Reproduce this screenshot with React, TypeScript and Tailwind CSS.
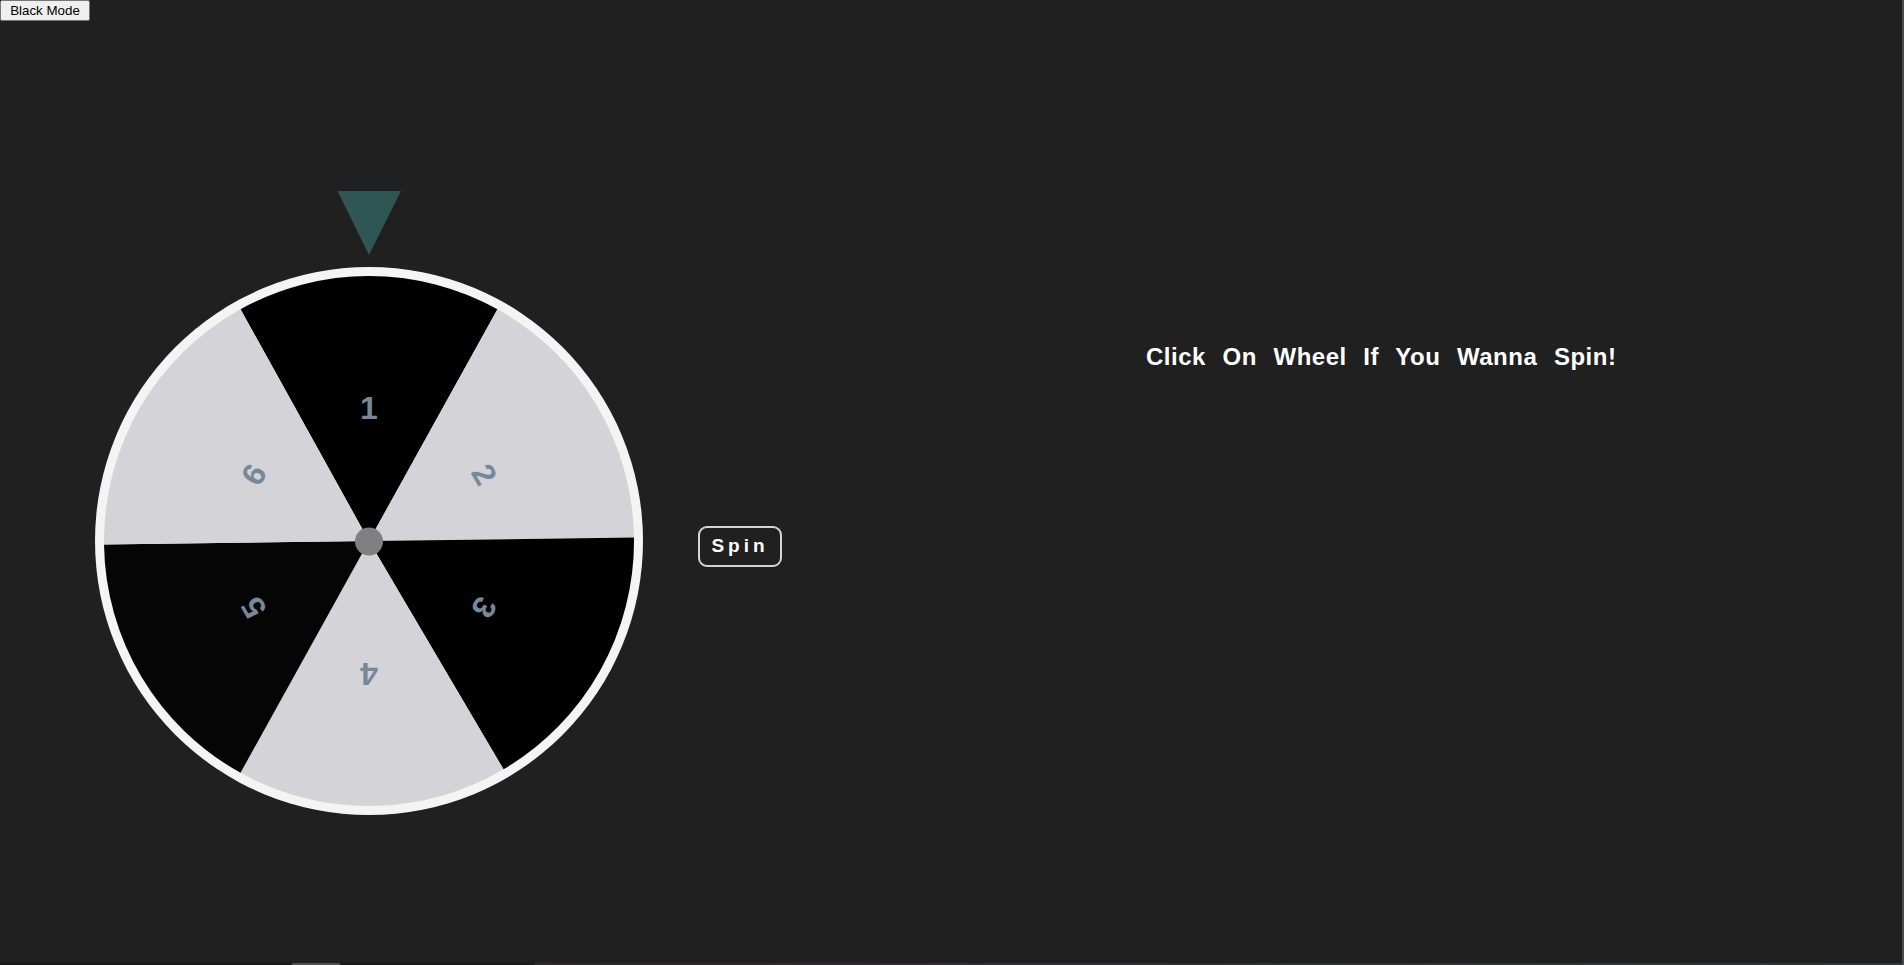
import React from "react";

const C = 274;
const R_IN = 265;

function pt(deg: number, r: number): [number, number] {
  const a = (deg * Math.PI) / 180;
  return [C + r * Math.sin(a), C - r * Math.cos(a)];
}

function sector(a0: number, a1: number): string {
  const [x0, y0] = pt(a0, R_IN);
  const [x1, y1] = pt(a1, R_IN);
  return `M ${C} ${C} L ${x0.toFixed(2)} ${y0.toFixed(2)} A ${R_IN} ${R_IN} 0 0 1 ${x1.toFixed(2)} ${y1.toFixed(2)} Z`;
}

const sectors = [
  { a0: -29, a1: 29, fill: "#000000" },
  { a0: 29, a1: 89.25, fill: "#d3d3d8" },
  { a0: 89.25, a1: 149.5, fill: "#000000" },
  { a0: 149.5, a1: 209, fill: "#d3d3d8" },
  { a0: 209, a1: 269.25, fill: "#050505" },
  { a0: 269.25, a1: 331, fill: "#d3d3d8" },
];

function Wheel() {
  return (
    <svg width="548" height="548" viewBox="0 0 548 548" className="block">
      <circle cx={C} cy={C} r={274} fill="#f4f4f4" />
      {sectors.map((s, i) => (
        <path key={i} d={sector(s.a0, s.a1)} fill={s.fill} />
      ))}
      {[1, 2, 3, 4, 5, 6].map((n, i) => {
        const ang = i * 60;
        const [x, y] = pt(ang, 133);
        return (
          <text
            key={n}
            x={x}
            y={y}
            fill="#778899"
            fontSize="32"
            fontWeight="bold"
            fontFamily="'Liberation Sans', Arial, sans-serif"
            textAnchor="middle"
            dominantBaseline="central"
            transform={`rotate(${ang} ${x} ${y})`}
          >
            {n}
          </text>
        );
      })}
      <circle cx={C} cy={C + 0.5} r={14} fill="#808080" />
    </svg>
  );
}

export default function App() {
  return (
    <div className="w-full h-[965px] bg-[#202020] flex font-['Liberation_Sans',Arial,sans-serif] overflow-hidden">
      <div className="flex-1 flex flex-col min-w-0">
        <div className="flex-1 flex flex-col">
          <button className="block w-[90px] h-[21px] bg-[#efefef] border border-[#767676] rounded-[2px] text-[13.33px] leading-none text-black font-['Liberation_Sans',Arial,sans-serif]">
            Black Mode
          </button>
          <div className="flex items-start pl-[95px] pt-[170px]">
            <div className="flex flex-col items-center w-[548px]">
              <svg width="64" height="64" viewBox="0 0 64 64" className="block">
                <polygon points="0.5,0 64,0 32,64" fill="#2f5654" />
              </svg>
              <div className="mt-[12px]">
                <Wheel />
              </div>
            </div>
            <button className="ml-[55px] mt-[335px] w-[84px] h-[41px] rounded-[9px] border-2 border-[#d4d4d4] bg-[#202020] text-white font-bold text-[19px] tracking-[4px] flex items-center justify-center">
              Spin
            </button>
            <h1 className="ml-[364px] mt-[152px] text-white font-bold text-[24px] leading-[28px] tracking-[0.5px] [word-spacing:9.5px] whitespace-nowrap">
              Click On Wheel If You Wanna Spin!
            </h1>
          </div>
        </div>
        <div className="h-[2px] flex shrink-0">
          <div className="w-[292px] bg-[#1a1a1a]" />
          <div className="w-[48px] bg-[#505050]" />
          <div className="w-[194px] bg-[#1a1a1a]" />
          <div className="flex-1 bg-gradient-to-r from-[#2e2a2b] via-[#2f2f33] to-[#2c3a38]" />
        </div>
      </div>
      <div className="w-[2px] bg-[#4a4a4a] shrink-0" />
    </div>
  );
}
